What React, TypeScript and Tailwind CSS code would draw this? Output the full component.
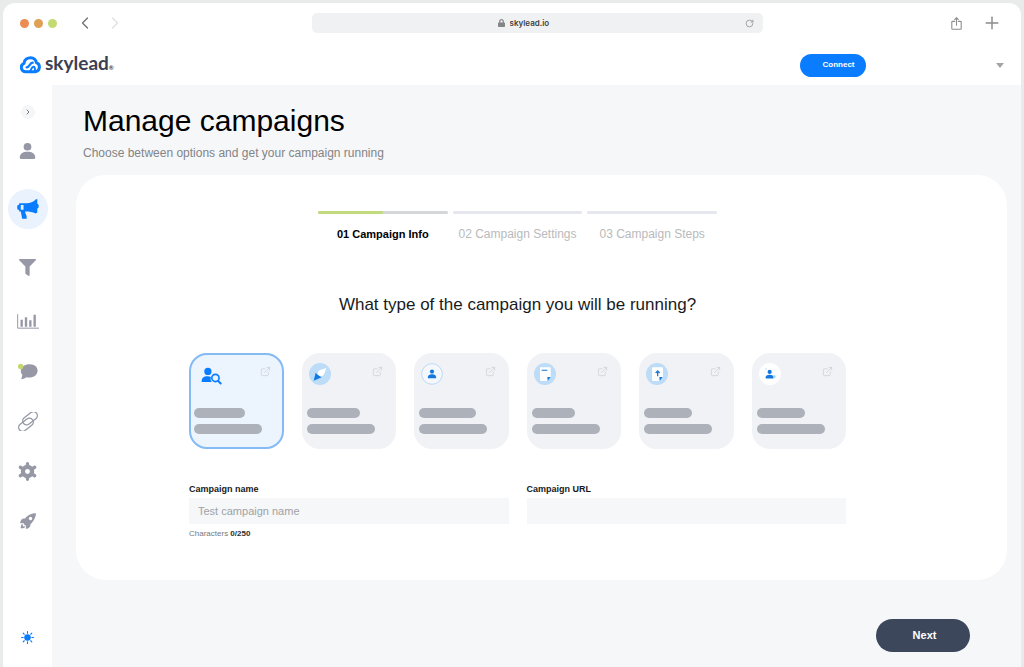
import { ReactNode, useState } from 'react'
import { ChevronLeft, ChevronRight, ExternalLink, Plus, RotateCw } from 'lucide-react'
import { FaFilter, FaLock } from 'react-icons/fa'
import { IoRocketSharp } from 'react-icons/io5'

const LogoIcon = () => (
  <svg viewBox="0 0 63 54" className="h-[18px] w-[21px]" fill="none" stroke="#0a7cff" strokeLinecap="round" strokeLinejoin="round">
    <path d="M30 47 H17 A13 13 0 0 1 12 22 C13 10 23 5 32 5 C41 5 48 11 49 20 A14 14 0 0 1 46 47 Z" strokeWidth="9" />
    <path d="M20 34 C30 34 28 20 38 20" strokeWidth="7" />
    <path d="M30 45 C35 42 33 32 41 32 C45 32 45 36 45 43" strokeWidth="6" />
  </svg>
)

const ShareIcon = () => (
  <svg viewBox="0 0 30 36" className="h-[13px] w-[11px]" fill="none" stroke="currentColor" strokeWidth="3" strokeLinecap="round" strokeLinejoin="round">
    <path d="M10 12 H4 Q2 12 2 14 V32 Q2 34 4 34 H26 Q28 34 28 32 V14 Q28 12 26 12 H20" />
    <path d="M15 23 V2 M10 7 L15 2 L20 7" />
  </svg>
)

const PersonShape = () => (
  <>
    <circle cx="12" cy="7" r="5" />
    <path d="M2 21 C2 16 6 13.500 12 13.500 C18 13.500 22 16 22 21 Q22 23 20 23 H4 Q2 23 2 21 Z" />
  </>
)

const UserIcon = () => (
  <svg viewBox="1 1 22 23" className="h-[18px] w-[17px]" fill="currentColor">
    <PersonShape />
  </svg>
)

const MegaphoneIcon = () => (
  <svg viewBox="0 0 64 58" className="h-5 w-[22px]" fill="currentColor">
    <path
      fillRule="evenodd"
      d="M7 12 H24 C36 13 47 9 54 1 L59 0 V13 L63 17 V24 L59 28 V39 L54 42 C46 37 36 36 25 36 L23 37 L28 50 V57 H15 L11 36 H7 L5 31 H2 Q-1 24 2 17 H5 Z M11 17 V31 H19 V17 Z"
    />
  </svg>
)

const ChartIcon = () => (
  <svg viewBox="0 0 66 44" className="h-[15px] w-[22px]" fill="none" stroke="currentColor">
    <path d="M2 0 V42 H66" strokeWidth="3" />
    <path d="M14 17 V38 M27 9 V38 M40 18 V38 M53 2 V38" strokeWidth="7" />
  </svg>
)

const ChatIcon = () => (
  <svg viewBox="0 0 60 50" className="h-[17px] w-5">
    <path d="M10 48 L13 35 C6 29 7 14 17 8 C27 1 45 1 54 10 C61 18 60 30 52 37 C44 44 33 44 26 42 C22 43 16 48 10 48 Z" fill="currentColor" />
    <circle cx="8" cy="10" r="8" fill="#c5d86d" />
  </svg>
)

const LinkIcon = () => (
  <svg viewBox="0 0 66 58" className="h-[19px] w-[22px]" fill="none" stroke="currentColor" strokeWidth="4">
    <g transform="rotate(-38 33 29)">
      <rect x="-3" y="21" width="50" height="24" rx="12" />
      <rect x="19" y="13" width="50" height="24" rx="12" />
    </g>
  </svg>
)

const GearIcon = () => (
  <svg viewBox="0 0 56 58" className="h-[19px] w-[19px]" fill="none" stroke="currentColor">
    <circle cx="28" cy="29" r="14" strokeWidth="13" />
    <path d="M28 10 V5 M28 48 V53 M11 19 L6 16 M45 19 L50 16 M11 39 L6 42 M45 39 L50 42" strokeWidth="10" strokeLinecap="round" />
  </svg>
)

const SunIcon = () => (
  <svg viewBox="0 0 24 24" className="h-[13px] w-[13px]" fill="#0a7cff" stroke="#0a7cff" strokeWidth="2" strokeLinecap="round">
    <circle cx="12" cy="12" r="5" />
    <path d="M12 1 V4 M12 20 V23 M1 12 H4 M20 12 H23 M4 4 L6 6 M18 18 L20 20 M4 20 L6 18 M18 6 L20 4" />
  </svg>
)

const UserSearchIcon = () => (
  <svg viewBox="0 0 64 54" className="h-[18px] w-[21px]" fill="#0a7cff">
    <circle cx="21" cy="13" r="11" />
    <path d="M2 45 C2 33 8 28 20 28 Q27 28 30 30 Q27 39 33 45 Z" />
    <circle cx="44" cy="33" r="11" fill="none" stroke="#0a7cff" strokeWidth="5" />
    <path d="M52 42 L60 50" stroke="#0a7cff" strokeWidth="6" strokeLinecap="round" />
  </svg>
)

const CompassIcon = () => (
  <svg viewBox="0 0 66 66" className="h-[22px] w-[22px]">
    <circle cx="33" cy="33" r="33" fill="#bddcf8" />
    <path d="M52 15 L31 22 L24 34 L33 42 L44 36 Z" fill="#fff" />
    <path d="M14 53 L20 29 L27 36 L38 43 Z" fill="#0f7ae5" />
  </svg>
)

const CirclePersonIcon = () => (
  <svg viewBox="0 0 66 66" className="h-[22px] w-[22px]">
    <circle cx="33" cy="33" r="31" fill="#f4f7fc" stroke="#bfd9f7" strokeWidth="3" />
    <g fill="#1478dc" transform="translate(18 17) scale(1.25)">
      <PersonShape />
    </g>
  </svg>
)

const DocumentIcon = () => (
  <svg viewBox="0 0 66 66" className="h-[22px] w-[22px]">
    <circle cx="33" cy="33" r="33" fill="#bddcf8" />
    <path d="M18 13 H47 Q50 13 50 16 V42 L41 54 H21 Q18 54 18 51 Z" fill="#fff" />
    <path d="M23 22 H40" stroke="#4b93dc" strokeWidth="4" />
    <path d="M40 42 H50 L41 54 Z" fill="#1478dc" />
  </svg>
)

const UploadIcon = () => (
  <svg viewBox="0 0 66 66" className="h-[22px] w-[22px]">
    <circle cx="33" cy="33" r="33" fill="#bddcf8" />
    <path d="M20 13 H48 Q51 13 51 16 V42 L41 54 H21 Q18 54 18 51 V16 Q18 13 20 13 Z" fill="#fff" />
    <path d="M35 40 V25 M29 30 L35 24 L41 30" stroke="#2478cf" strokeWidth="4" fill="none" />
    <path d="M40 42 H50 L41 54 Z" fill="#1478dc" />
  </svg>
)

const LeadIcon = () => (
  <svg viewBox="0 0 66 66" className="h-[22px] w-[22px]">
    <circle cx="33" cy="33" r="33" fill="#fff" />
    <g fill="#1478dc" transform="translate(17 18) scale(1.25)">
      <PersonShape />
    </g>
    <circle cx="46" cy="41" r="4" fill="#a9cff5" />
    <circle cx="21" cy="18" r="2" fill="#a9cff5" />
  </svg>
)

type CampaignType = {
  name: string
  icon: ReactNode
  titleWidth: string
}

const campaignTypes: CampaignType[] = [
  { name: 'Search', icon: <UserSearchIcon />, titleWidth: 'w-[51px]' },
  { name: 'Navigator', icon: <CompassIcon />, titleWidth: 'w-[53px]' },
  { name: 'Profile', icon: <CirclePersonIcon />, titleWidth: 'w-[57px]' },
  { name: 'Post', icon: <DocumentIcon />, titleWidth: 'w-[43px]' },
  { name: 'Import', icon: <UploadIcon />, titleWidth: 'w-[48px]' },
  { name: 'Lead', icon: <LeadIcon />, titleWidth: 'w-[48px]' },
]

const NavItem = ({ label, active, children }: { label: string; active?: boolean; children: ReactNode }) => (
  <a
    href="#"
    aria-label={label}
    className={`flex h-10 w-10 items-center justify-center rounded-full ${
      active ? 'bg-[#e9f2fd] text-[#0a7cff]' : 'text-[#9698a6]'
    }`}
  >
    {children}
  </a>
)

const BrowserBar = () => (
  <div className="flex h-10 items-center pr-[19px] pl-[17px] text-[#8a8b8d]">
    <div className="flex flex-[11] items-center">
      <div className="flex gap-[5px]">
        <span className="h-[9px] w-[9px] rounded-full bg-[#ec8b52]" />
        <span className="h-[9px] w-[9px] rounded-full bg-[#dfa056]" />
        <span className="h-[9px] w-[9px] rounded-full bg-[#c3db71]" />
      </div>
      <button type="button" aria-label="Back" className="ml-[18px] text-[#6f7072]">
        <ChevronLeft className="h-5 w-5" strokeWidth={1.5} />
      </button>
      <button type="button" aria-label="Forward" className="ml-[10px] text-[#dfe0e1]">
        <ChevronRight className="h-5 w-5" strokeWidth={1.5} />
      </button>
    </div>
    <div className="flex h-5 w-[46%] items-center rounded-[5px] bg-[#f0f1f2] pr-[9px]">
      <div className="flex flex-1 items-center justify-center gap-[5px]">
        <FaLock className="h-2 w-[7px] text-[#858688]" />
        <input
          aria-label="Address"
          defaultValue="skylead.io"
          className="w-[50px] bg-transparent font-['Inter',sans-serif] text-[8px] font-semibold text-[#3d3e40] outline-none"
        />
      </div>
      <button type="button" aria-label="Reload">
        <RotateCw className="h-[9px] w-[9px]" strokeWidth={2} />
      </button>
    </div>
    <div className="flex flex-[9] items-center justify-end gap-5">
      <button type="button" aria-label="Share">
        <ShareIcon />
      </button>
      <button type="button" aria-label="New tab">
        <Plus className="h-5 w-5" strokeWidth={1.75} />
      </button>
    </div>
  </div>
)

const Header = () => (
  <header className="flex h-[42px] items-center justify-between px-[17px] pt-[2px]">
    <a href="#" className="flex items-center gap-1 font-['Lato',sans-serif] text-[19px] leading-6 font-bold text-[#3b3f52]">
      <LogoIcon />
      <span>
        skylead<span className="text-[6px]">®</span>
      </span>
    </a>
    <div className="flex items-center gap-[130px]">
      <button type="button" className="h-[23px] w-[66px] rounded-full bg-[#0a7cff] pl-[11px] text-[8px] font-bold text-white">
        Connect
      </button>
      <button type="button" aria-label="Account menu">
        <svg viewBox="0 0 8 5" className="h-[5px] w-2" fill="#a3a4a6">
          <path d="M0 0 H8 L4 5 Z" />
        </svg>
      </button>
    </div>
  </header>
)

const Sidebar = () => (
  <aside className="flex w-[49px] shrink-0 flex-col items-center bg-white pt-5 pb-[23px]">
    <button type="button" aria-label="Expand menu" className="flex h-[14px] w-[14px] items-center justify-center rounded-full bg-[#f5f6f8] text-[#77797f]">
      <ChevronRight className="h-2 w-2" strokeWidth={3} />
    </button>
    <nav className="mt-3 flex flex-col">
      <div className="flex flex-col gap-[18px]">
        <NavItem label="Profile">
          <UserIcon />
        </NavItem>
        <NavItem label="Campaigns" active>
          <MegaphoneIcon />
        </NavItem>
        <NavItem label="Filters">
          <FaFilter className="h-[17px] w-[17px]" />
        </NavItem>
      </div>
      <div className="mt-[14px] flex flex-col gap-[10px]">
        <NavItem label="Reports">
          <ChartIcon />
        </NavItem>
        <NavItem label="Inbox">
          <ChatIcon />
        </NavItem>
        <NavItem label="Integrations">
          <LinkIcon />
        </NavItem>
        <NavItem label="Settings">
          <GearIcon />
        </NavItem>
        <NavItem label="Boost">
          <IoRocketSharp className="h-[18px] w-[18px]" />
        </NavItem>
      </div>
    </nav>
    <button type="button" aria-label="Light mode" className="mt-auto">
      <SunIcon />
    </button>
  </aside>
)

const Steps = () => (
  <ol className="mx-auto grid w-[399px] grid-cols-3 gap-[5px] text-center text-[12px] leading-5 text-[#b9babc]">
    <li aria-current="step" className="text-[11px] font-bold text-black">
      <div className="mb-[10px] h-[3px] rounded-full bg-[#d5d6d8]">
        <div className="h-full w-1/2 rounded-full bg-[#c0da7c]" />
      </div>
      01 Campaign Info
    </li>
    <li>
      <div className="mb-[10px] h-[3px] rounded-full bg-[#e5e6ee]" />
      02 Campaign Settings
    </li>
    <li>
      <div className="mb-[10px] h-[3px] rounded-full bg-[#e5e6ee]" />
      03 Campaign Steps
    </li>
  </ol>
)

export default function App() {
  const [selected, setSelected] = useState('Search')
  const [name, setName] = useState('')
  const [url, setUrl] = useState('')

  return (
    <div className="min-h-screen bg-[#e9ebeb] px-[3px] pt-[3px] font-['Liberation_Sans',Arial,sans-serif]">
      <div className="flex min-h-[calc(100vh-3px)] flex-col overflow-hidden rounded-t-[12px] bg-white">
        <BrowserBar />
        <Header />
        <div className="flex flex-1">
          <Sidebar />
          <main className="flex-1 bg-[#f5f7f9] pt-[18px] pr-[14px] pb-[15px] pl-6">
            <h1 className="pl-[7px] text-[30px] leading-9 text-black">Manage campaigns</h1>
            <p className="mt-1 pl-[7px] text-[12px] leading-5 text-[#838487]">
              Choose between options and get your campaign running
            </p>
            <form onSubmit={(e) => e.preventDefault()}>
              <div className="mt-3 rounded-[30px] bg-white pt-9 pr-[161px] pb-[38px] pl-[113px]">
                <Steps />
                <h2 className="mt-[47px] text-center text-[17px] leading-7 text-[#1a1b1d]">
                  What type of the campaign you will be running?
                </h2>
                <div className="mt-[34px] grid grid-cols-6 gap-[18px]">
                  {campaignTypes.map((type) => (
                    <button
                      key={type.name}
                      type="button"
                      aria-label={type.name}
                      aria-pressed={selected === type.name}
                      onClick={() => setSelected(type.name)}
                      className={`flex h-24 flex-col rounded-[18px] border-2 pt-2 pb-[13px] pl-[3px] ${
                        selected === type.name ? 'border-[#85baf5] bg-[#ecf4fe]' : 'border-[#f0f2f5] bg-[#f0f2f5]'
                      }`}
                    >
                      <span className="flex h-[22px] w-full items-start justify-between pr-[11px] pl-[2px]">
                        <span className={selected === type.name ? 'pt-1 pl-[5px]' : ''}>{type.icon}</span>
                        <ExternalLink className="mt-[3px] h-[11px] w-[11px] text-[#c9ccd1]" strokeWidth={1.5} />
                      </span>
                      <span className={`mt-auto h-[10px] rounded-full bg-[#adb1b9] ${type.titleWidth}`} />
                      <span className="mt-[6px] h-[10px] w-[68px] rounded-full bg-[#adb1b9]" />
                    </button>
                  ))}
                </div>
                <div className="mt-8 grid grid-cols-2 gap-[18px]">
                  <div>
                    <label htmlFor="name" className="block text-[9px] leading-4 font-bold text-[#17181a]">
                      Campaign name
                    </label>
                    <input
                      id="name"
                      type="text"
                      maxLength={250}
                      placeholder="Test campaign name"
                      value={name}
                      onChange={(e) => setName(e.target.value)}
                      className="mt-px block h-[26px] w-full bg-[#f5f7f8] px-[9px] text-[11px] outline-none placeholder:text-[#a0a2a5]"
                    />
                    <p className="mt-[2px] text-[8px] leading-4 text-[#77797d]">
                      Characters <b className="text-[#2b2d30]">{name.length}/250</b>
                    </p>
                  </div>
                  <div>
                    <label htmlFor="url" className="block text-[9px] leading-4 font-bold text-[#17181a]">
                      Campaign URL
                    </label>
                    <input
                      id="url"
                      type="text"
                      value={url}
                      onChange={(e) => setUrl(e.target.value)}
                      className="mt-px block h-[26px] w-full bg-[#f5f7f8] px-[9px] text-[11px] outline-none"
                    />
                  </div>
                </div>
              </div>
              <div className="mt-[39px] flex justify-end pr-[37px]">
                <button type="submit" className="h-[33px] w-[94px] rounded-full bg-[#3d475c] pl-[3px] text-[11px] font-bold text-white">
                  Next
                </button>
              </div>
            </form>
          </main>
        </div>
      </div>
    </div>
  )
}
